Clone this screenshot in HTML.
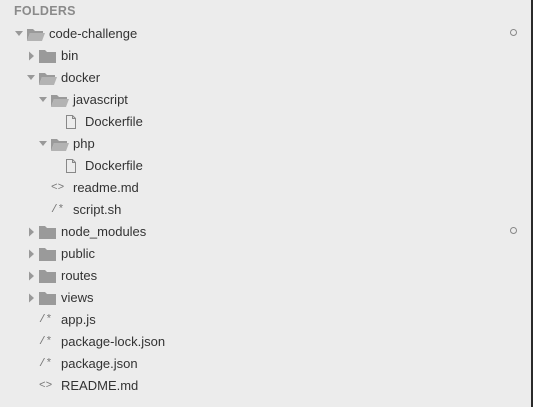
<!DOCTYPE html><html><head><style>
body{margin:0;width:533px;height:407px;background:#ececec;font-family:"Liberation Sans",sans-serif;position:relative;overflow:hidden}
.edge{position:absolute;right:0;top:0;width:2px;height:407px;background:#2a2a2a}
.h{position:absolute;left:14px;top:4px;font-size:12.5px;font-weight:bold;color:#8a8a8a;letter-spacing:.3px}
.r{position:absolute;height:22px;line-height:22px;font-size:13px;color:#333;white-space:nowrap}
.r svg{position:absolute;top:0}
.t{position:absolute;top:0}
.ic{position:absolute;top:0;font-size:11px;color:#777;font-family:"Liberation Mono",monospace}
.dot{position:absolute;left:510px;width:5px;height:5px;border:1.3px solid #888;border-radius:50%}
</style></head><body>
<div class="edge"></div>
<div class="h">FOLDERS</div>
<div id="rows"></div>
<div class="dot" style="top:29px"></div>
<div class="dot" style="top:227px"></div>
<script>
var rows=[
[0,'fo','code-challenge',1],[1,'fc','bin'],[1,'fo','docker'],[2,'fo','javascript'],[3,'f','Dockerfile'],
[2,'fo','php'],[3,'f','Dockerfile'],[2,'m','readme.md'],[2,'s','script.sh'],
[1,'fc','node_modules'],[1,'fc','public'],[1,'fc','routes'],[1,'fc','views'],
[1,'s','app.js'],[1,'s','package-lock.json'],[1,'s','package.json'],[1,'m','README.md']];
var h='';
rows.forEach(function(r,i){
 var y=23+i*22, lv=r[0], ax=14+lv*12, fx=26+lv*12, tx=49+lv*12;
 var s='';
 if(r[1]=='fo'||r[1]=='fc'){
  if(r[1]=='fo') s+='<svg style="left:'+ax+'px" width="10" height="22"><path d="M1 8h8l-4 5z" fill="#999"/></svg>';
  else s+='<svg style="left:'+(ax+1)+'px" width="10" height="22"><path d="M2 6.5v9l5-4.5z" fill="#999"/></svg>';
  if(r[1]=='fo') s+='<svg style="left:'+fx+'px" width="20" height="22"><path d="M1 6h6l2 2h8v2H4l-3 8z" fill="#9a9a9a"/><path d="M4 10h15l-3 8H1z" fill="#b3b3b3"/></svg>';
  else s+='<svg style="left:'+fx+'px" width="20" height="22"><path d="M1 5h6l2 2h9v11H1z" fill="#9a9a9a"/></svg>';
  s+='<span class="t" style="left:'+tx+'px">'+r[2]+'</span>';
 } else if(r[1]=='f'){
  s+='<svg style="left:'+(fx+2)+'px" width="14" height="22"><path d="M2.5 4.5h6l3 3v10h-9z" fill="none" stroke="#888"/><path d="M8.5 4.5v3h3" fill="none" stroke="#888"/></svg>';
  s+='<span class="t" style="left:'+tx+'px">'+r[2]+'</span>';
 } else {
  var g=r[1]=='m'?'&lt;&gt;':'/*';
  s+='<span class="ic" style="left:'+(fx+1)+'px">'+g+'</span>';
  s+='<span class="t" style="left:'+tx+'px">'+r[2]+'</span>';
 }
 h+='<div class="r" style="left:0;top:'+y+'px;width:500px">'+s+'</div>';
});
document.getElementById('rows').innerHTML=h;
</script>
</body></html>
